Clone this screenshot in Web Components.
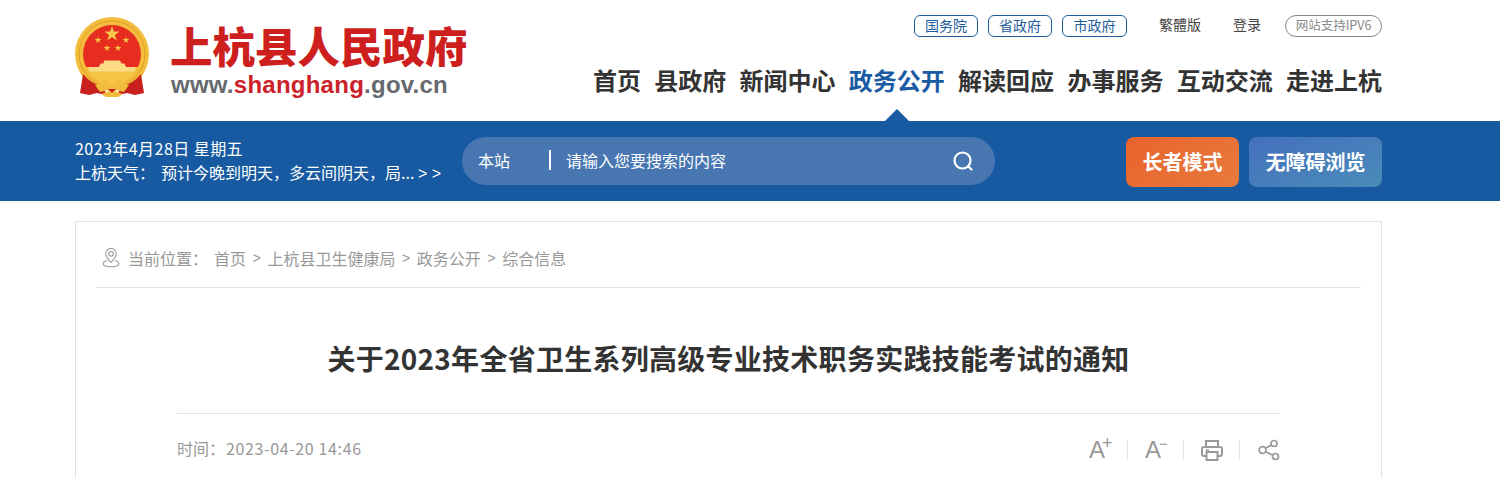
<!DOCTYPE html>
<html lang="zh">
<head>
<meta charset="utf-8">
<title>上杭县人民政府</title>
<style>
  html, body { margin: 0; padding: 0; background: #fff; }
  body { height: 478px; overflow: hidden; font-family: "Noto Sans CJK SC", "Liberation Sans", sans-serif; }
</style>
</head>
<body>
<site-header></site-header>
<info-bar></info-bar>
<article-card>
  <bread-crumb slot="crumb"></bread-crumb>
  <span slot="title">关于2023年全省卫生系列高级专业技术职务实践技能考试的通知</span>
  <time-stamp slot="time">2023-04-20 14:46</time-stamp>
  <article-tools slot="tools"></article-tools>
</article-card>

<script>
// five pointed star for the emblem
function star(cx, cy, r) {
  var pts = [];
  for (var i = 0; i < 10; i++) {
    var a = -Math.PI / 2 + i * Math.PI / 5;
    var d = i % 2 ? r * 0.38 : r;
    pts.push((cx + d * Math.cos(a)).toFixed(2) + ',' + (cy + d * Math.sin(a)).toFixed(2));
  }
  return `<polygon points="${pts.join(' ')}" fill="#f7cb4e"/>`;
}

class SiteLogo extends HTMLElement {
  constructor() {
    super();
    this.attachShadow({mode: 'open'});
    this.shadowRoot.innerHTML = `
      <style>
        :host { display: flex; align-items: flex-start; }
        svg { display: block; margin-top: 15px; flex: none; }
        .text { margin: 24px 0 0 20px; }
        .name {
          font: 900 42.5px/42px "Noto Sans CJK SC", sans-serif;
          color: #ce1f1f;
          white-space: nowrap;
        }
        .url {
          font: bold 24px/28px "Liberation Sans", sans-serif;
          color: #666a6e;
          letter-spacing: .25px;
          margin: 5px 0 0 1px;
          white-space: nowrap;
        }
        .url b { color: #cb2229; }
      </style>
      <svg width="75" height="84" viewBox="0 0 75 84">
        <circle cx="37" cy="39" r="37" fill="#f2bd3c"/>
        <circle cx="37" cy="39" r="33" fill="none" stroke="#e3a024" stroke-width="1"/>
        <circle cx="37" cy="39" r="29" fill="#e62d20"/>
        <path d="M11 52h52q-6 14-26 19q-20-5-26-19z" fill="#f5c544"/>
        <path d="M14 52h46v4.500h-46z" fill="#fbdc85"/>
        <path d="M29 45.500h16l1.500 3h3l1.500 3.500h-27l1.500-3.500h3z" fill="#fbdc85"/>
        ${star(37, 19, 8)}
        ${star(23, 25, 3.6)}
        ${star(51, 25, 3.6)}
        ${star(32, 33, 3.6)}
        ${star(43, 33, 3.6)}
        <path d="M8 59q8 10 21 13l2 8l-9-2l-8 2l-9-2z" fill="#c9201f"/>
        <path d="M66 59q-8 10-21 13l-2 8l9-2l8 2l9-2z" fill="#c9201f"/>
        <path d="M20 70q6-1 9-7q4 5 8 5q4 0 8-5q3 6 9 7l-5 7l-12-3l-12 3z" fill="#f2bd3c"/>
        <path d="M26 79l11-4l11 4l-5 3h-12z" fill="#f2bd3c"/>
        <path d="M33 74h8l-4 4z" fill="#c9201f"/>
      </svg>
      <div class="text">
        <div class="name">上杭县人民政府</div>
        <div class="url">www.<b>shanghang</b>.gov.cn</div>
      </div>
    `;
  }
}

class TopLinks extends HTMLElement {
  constructor() {
    super();
    this.attachShadow({mode: 'open'});
    this.shadowRoot.innerHTML = `
      <style>
        :host { display: flex; align-items: center; font-size: 14px; height: 22px; }
        a { white-space: nowrap; }
        .gov {
          box-sizing: border-box;
          height: 22px;
          line-height: 18px;
          width: 64px;
          text-align: center;
          margin-right: 10px;
          border: 1px solid #1f5c99;
          border-radius: 6px;
          color: #1f5c99;
        }
        .gov.last { width: 65px; margin-right: 0; }
        .plain { color: #444; margin-left: 32px; line-height: 18px; height: 22px; }
        .ipv6 {
          box-sizing: border-box;
          height: 22px;
          line-height: 18px;
          width: 97px;
          text-align: center;
          margin-left: 24px;
          border: 1px solid #888;
          border-radius: 11px;
          font-size: 12.500px;
          color: #888;
        }
      </style>
      <a class="gov">国务院</a>
      <a class="gov">省政府</a>
      <a class="gov last">市政府</a>
      <a class="plain">繁體版</a>
      <a class="plain">登录</a>
      <a class="ipv6">网站支持IPV6</a>
    `;
  }
}

class MainNav extends HTMLElement {
  constructor() {
    super();
    this.attachShadow({mode: 'open'});
    this.shadowRoot.innerHTML = `
      <style>
        :host { display: flex; gap: 13.300px; font-size: 24px; font-weight: bold; line-height: 36px; color: #333; }
        a { position: relative; white-space: nowrap; }
        a.on { color: #1a5ba3; }
        a.on::after {
          content: "";
          position: absolute;
          left: 50%;
          bottom: -23px;
          margin-left: -12px;
          border-left: 12px solid transparent;
          border-right: 12px solid transparent;
          border-bottom: 12px solid #1a5ba3;
        }
      </style>
      <a>首页</a><a>县政府</a><a>新闻中心</a><a class="on">政务公开</a><a>解读回应</a><a>办事服务</a><a>互动交流</a><a>走进上杭</a>
    `;
  }
}

class SiteHeader extends HTMLElement {
  constructor() {
    super();
    this.attachShadow({mode: 'open'});
    this.shadowRoot.innerHTML = `
      <style>
        :host { display: block; height: 121px; }
        .wrap { width: 1307px; margin-left: 75px; display: flex; justify-content: space-between; }
        .right { display: flex; flex-direction: column; align-items: flex-end; padding-top: 15px; gap: 25px; }
      </style>
      <div class="wrap">
        <site-logo></site-logo>
        <div class="right">
          <top-links></top-links>
          <main-nav></main-nav>
        </div>
      </div>
    `;
  }
}

class SearchBox extends HTMLElement {
  constructor() {
    super();
    this.attachShadow({mode: 'open'});
    this.shadowRoot.innerHTML = `
      <style>
        :host {
          display: flex; align-items: center;
          box-sizing: border-box;
          width: 533px; height: 48px;
          padding: 0 20px 0 16px;
          border-radius: 24px;
          background: #4776b1;
          color: #fff;
          font-size: 16px;
        }
        span { margin-bottom: 2px; }
        .scope { width: 71px; }
        .bar { width: 2px; height: 20px; background: #fff; margin-right: 15px; }
        .hint { flex: 1; }
        svg { display: block; }
      </style>
      <span class="scope">本站</span>
      <span class="bar"></span>
      <span class="hint">请输入您要搜索的内容</span>
      <svg width="24" height="24" viewBox="0 0 24 24" fill="none" stroke="#fff" stroke-width="2.200" stroke-linecap="round">
        <circle cx="11.500" cy="11.500" r="8"/>
        <path d="M17.500 17.500l3 3"/>
      </svg>
    `;
  }
}

class InfoBar extends HTMLElement {
  constructor() {
    super();
    this.attachShadow({mode: 'open'});
    this.shadowRoot.innerHTML = `
      <style>
        :host { display: block; height: 80px; background: #175aa1; color: #fff; }
        .wrap {
          box-sizing: border-box;
          width: 1307px; height: 80px; margin-left: 75px;
          display: flex; align-items: flex-start;
          padding-top: 16px;
        }
        .info { width: 387px; font-size: 16px; line-height: 24px; white-space: nowrap; }
        .date { letter-spacing: .45px; margin-top: -1px; }
        .w { margin-left: 6px; }
        .more { font-family: "Liberation Sans", sans-serif; }
        .btns { margin-left: auto; display: flex; gap: 10px; }
        .btn {
          height: 50px; line-height: 50px;
          border-radius: 8px;
          font-size: 20px; font-weight: bold;
          text-align: center;
          white-space: nowrap;
        }
        .old { width: 113px; background: linear-gradient(135deg, #e8632c, #e87a3e); }
        .free { width: 133px; background: linear-gradient(160deg, #4470bd, #4a8cb9); }
      </style>
      <div class="wrap">
        <div class="info">
          <div class="date">2023年4月28日 星期五</div>
          <div>上杭天气：<span class="w">预计今晚到明天，多云间阴天，局...</span> <span class="more">&gt; &gt;</span></div>
        </div>
        <search-box></search-box>
        <div class="btns">
          <div class="btn old">长者模式</div>
          <div class="btn free">无障碍浏览</div>
        </div>
      </div>
    `;
  }
}

class BreadCrumb extends HTMLElement {
  constructor() {
    super();
    this.attachShadow({mode: 'open'});
    this.shadowRoot.innerHTML = `
      <style>
        :host { display: flex; align-items: center; font-size: 16px; color: #999; white-space: nowrap; }
        svg { display: block; margin-right: 7px; }
        .here { margin-right: 6px; }
        i { font-style: normal; margin: 0 6.600px; font-family: "Liberation Sans", sans-serif; font-size: 14px; }
      </style>
      <svg width="20" height="20" viewBox="0 0 20 20" fill="none" stroke="#999" stroke-width="1.100">
        <path d="M10 14.500c-3-3.400-5.300-5.800-5.300-8.700a5.300 5.300 0 0 1 10.600 0c0 2.900-2.300 5.300-5.300 8.700z"/>
        <circle cx="10" cy="5.800" r="2.300"/>
        <path d="M6.200 12.500c-2.500.7-4.200 2-4.200 3.300c0 1.600 3.500 3 8 3s8-1.400 8-3c0-1.300-1.700-2.600-4.200-3.300"/>
      </svg>
      <span class="here">当前位置：</span>
      <span>首页</span><i>&gt;</i><span>上杭县卫生健康局</span><i>&gt;</i><span>政务公开</span><i>&gt;</i><span>综合信息</span>
    `;
  }
}

class TimeStamp extends HTMLElement {
  constructor() {
    super();
    this.attachShadow({mode: 'open'});
    this.shadowRoot.innerHTML = `
      <style>
        :host { display: block; white-space: nowrap; font-size: 16px; color: #999; }
        .v { letter-spacing: .62px; margin-left: 1px; }
      </style>
      时间：<span class="v"><slot></slot></span>
    `;
  }
}

class ArticleTools extends HTMLElement {
  constructor() {
    super();
    this.attachShadow({mode: 'open'});
    this.shadowRoot.innerHTML = `
      <style>
        :host { display: flex; align-items: center; color: #999; margin-top: 4px; }
        .tool { width: 22px; height: 24px; display: flex; align-items: center; }
        .sep { width: 1px; height: 20px; background: #e3e3e3; margin: 0 18px 0 15px; }
        .a { position: relative; width: 22px; margin-left: -1px; font: 24px/24px "Liberation Sans", sans-serif; }
        .a span { position: absolute; left: 13px; top: -2px; font-size: 18px; line-height: 15px; }
        .a span.minus { left: 14px; font-size: 15px; }
        svg { display: block; }
        .print svg { margin-left: -1px; }
      </style>
      <div class="tool"><div class="a">A<span>+</span></div></div>
      <div class="sep"></div>
      <div class="tool"><div class="a">A<span class="minus">−</span></div></div>
      <div class="sep"></div>
      <div class="tool print">
        <svg width="22" height="22" viewBox="0 0 22 22" fill="none" stroke="#999" stroke-width="2">
          <path d="M5 8V2h12v6"/>
          <path d="M5.500 17H3a2 2 0 0 1-2-2V10a2 2 0 0 1 2-2h16a2 2 0 0 1 2 2v5a2 2 0 0 1-2 2h-2.500"/>
          <path d="M5.500 13h11V21h-11z"/>
          <path d="M5 11h3" stroke-width="1.500"/>
        </svg>
      </div>
      <div class="sep"></div>
      <div class="tool">
        <svg width="22" height="22" viewBox="0 0 22 22" fill="none" stroke="#999" stroke-width="1.700">
          <circle cx="4.500" cy="11" r="3.400"/>
          <circle cx="16" cy="4.500" r="3"/>
          <circle cx="17.500" cy="17.500" r="3"/>
          <path d="M7.500 9.300L13.400 6M7.500 12.700L14.800 16.200"/>
        </svg>
      </div>
    `;
  }
}

var cardTemplate = document.createElement('template');
cardTemplate.innerHTML = `
  <style>
    :host {
      display: block;
      box-sizing: border-box;
      width: 1307px;
      margin: 20px 0 0 75px;
      padding: 0 20px;
      border: 1px solid #e3e3e3;
      border-bottom: 0;
    }
    .crumbline { border-bottom: 1px solid #e3e3e3; height: 59px; padding: 6px 0 0 5px; display: flex; align-items: center; }
    h1 {
      margin: 0 81px;
      padding: 45px 0 30px;
      font-size: 28px;
      line-height: 50px;
      font-weight: bold;
      letter-spacing: .27px;
      color: #333;
      text-align: center;
      white-space: nowrap;
      border-bottom: 1px solid #e3e3e3;
    }
    .meta {
      margin: 0 81px;
      height: 68px;
      display: flex; align-items: center; justify-content: space-between;
    }
  </style>
  <div class="crumbline"><slot name="crumb"></slot></div>
  <h1><slot name="title"></slot></h1>
  <div class="meta">
    <slot name="time"></slot>
    <slot name="tools"></slot>
  </div>
`;

class ArticleCard extends HTMLElement {
  constructor() {
    super();
    this.attachShadow({mode: 'open'});
    this.shadowRoot.appendChild(cardTemplate.content.cloneNode(true));
  }
}

customElements.define('site-logo', SiteLogo);
customElements.define('top-links', TopLinks);
customElements.define('main-nav', MainNav);
customElements.define('site-header', SiteHeader);
customElements.define('search-box', SearchBox);
customElements.define('info-bar', InfoBar);
customElements.define('bread-crumb', BreadCrumb);
customElements.define('time-stamp', TimeStamp);
customElements.define('article-tools', ArticleTools);
customElements.define('article-card', ArticleCard);
</script>
</body>
</html>
